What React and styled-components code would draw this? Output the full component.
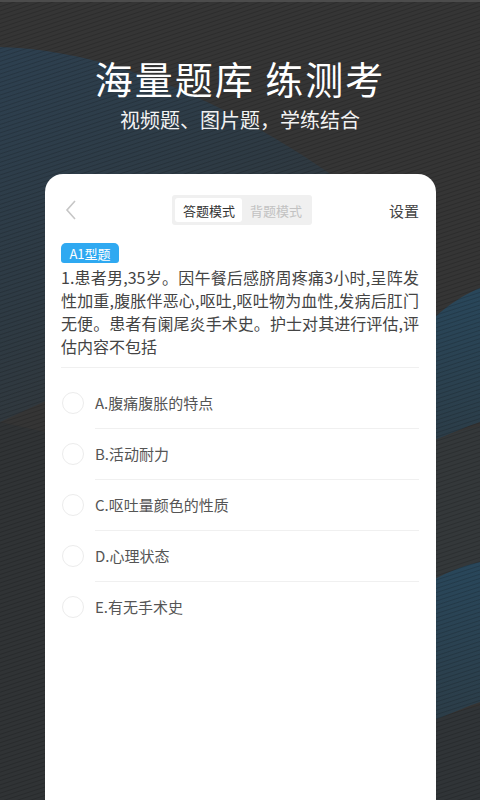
import React from "react";
import styled, { createGlobalStyle } from "styled-components";

const GlobalStyle = createGlobalStyle`
    html, body {
        margin: 0;
        padding: 0;
        background: #343434;
    }
    body {
        font-family: "Noto Sans CJK SC", "Noto Sans", sans-serif;
        -webkit-font-smoothing: antialiased;
    }
`;

const Screen = styled.div`
    position: relative;
    width: 480px;
    height: 800px;
    overflow: hidden;
    background: #353535;
    border-top: 2px solid #4c4c4c;
    box-sizing: border-box;
    display: flex;
    flex-direction: column;
    align-items: center;
`;

const Backdrop = styled.svg`
    position: absolute;
    left: 0;
    top: 0;
    z-index: 0;
`;

const Hero = styled.div`
    position: relative;
    z-index: 1;
    display: flex;
    flex-direction: column;
    align-items: center;
    padding-top: 48px;
    color: #fff;
`;

const Title = styled.h1`
    margin: 0;
    font-size: 38px;
    line-height: 55px;
    font-weight: 400;
    letter-spacing: 2px;
`;

const Subtitle = styled.p`
    margin: 0;
    font-size: 20px;
    line-height: 29px;
    font-weight: 400;
    color: #f2f2f2;
`;

const Card = styled.div`
    position: relative;
    z-index: 1;
    margin-top: 40px;
    width: 391px;
    flex: 1;
    margin-left: 1px;
    background: #fff;
    border-radius: 18px 18px 0 0;
    padding: 16px 17px 0 16px;
    box-sizing: border-box;
`;

const Header = styled.div`
    height: 40px;
    display: flex;
    align-items: center;
    justify-content: space-between;
`;

const Back = styled.svg`
    margin-left: 4px;
`;

const Segment = styled.div`
    display: flex;
    background: #f0f0f0;
    border-radius: 3px;
    padding: 3px;
    margin-left: 19px;
`;

const SegButton = styled.span`
    width: 67px;
    height: 24px;
    display: flex;
    align-items: center;
    justify-content: center;
    font-size: 13px;
    border-radius: 3px;
    color: ${(p) => (p.$active ? "#333" : "#c2c2c2")};
    background: ${(p) => (p.$active ? "#fff" : "transparent")};
`;

const Settings = styled.span`
    font-size: 15px;
    color: #444;
`;

const Tag = styled.span`
    display: inline-flex;
    align-items: center;
    justify-content: center;
    margin-top: 13px;
    width: 58px;
    height: 20px;
    border-radius: 5px 5px 3px 3px;
    background: #2fa9f1;
    color: #fff;
    font-size: 13px;
`;

const Question = styled.p`
    margin: 2px 0 0;
    padding-bottom: 9px;
    font-size: 16px;
    line-height: 23px;
    color: #444;
    border-bottom: 1px solid #f0f0f0;
    text-align: justify;
`;

const Options = styled.ul`
    list-style: none;
    margin: 10px 0 0;
    padding: 0;
`;

const Option = styled.li`
    display: flex;
    align-items: center;
`;

const Radio = styled.span`
    width: 22px;
    height: 22px;
    box-sizing: border-box;
    border-radius: 50%;
    border: 1px solid #ececec;
    margin-left: 1px;
    margin-right: 11px;
    flex-shrink: 0;
`;

const OptionLabel = styled.span`
    flex: 1;
    height: 50px;
    display: flex;
    align-items: center;
    font-size: 15px;
    color: #555;
    border-bottom: ${(p) => (p.$last ? "none" : "1px solid #f0f0f0")};
`;

const options = [
    "A.腹痛腹胀的特点",
    "B.活动耐力",
    "C.呕吐量颜色的性质",
    "D.心理状态",
    "E.有无手术史",
];

const Waves = () => (
    <Backdrop width="480" height="800" viewBox="0 0 480 800">
        <defs>
            <pattern id="lines" width="4" height="4" patternUnits="userSpaceOnUse" patternTransform="rotate(-18)">
                <rect width="4" height="1" fill="#000" opacity="0.16" />
            </pattern>
            <linearGradient id="band1" x1="0" y1="0" x2="0.6" y2="1">
                <stop offset="0" stopColor="#2d4050" />
                <stop offset="0.55" stopColor="#2e3a43" />
                <stop offset="1" stopColor="#333638" />
            </linearGradient>
            <linearGradient id="band2" x1="0" y1="0" x2="0" y2="1">
                <stop offset="0" stopColor="#29475b" />
                <stop offset="1" stopColor="#2c3d48" />
            </linearGradient>
        </defs>
        <path d="M0 45 C110 48 230 100 345 182 L345 260 L0 420 Z" fill="url(#band1)" />
        <path d="M0 420 L45 430 L45 800 L0 800 Z" fill="#303335" />
        <path d="M430 320 C450 300 470 290 480 286 L480 420 C465 425 450 432 430 440 Z" fill="url(#band2)" />
        <path d="M430 440 C450 432 470 426 480 424 L480 560 C465 565 450 570 430 580 Z" fill="#34383a" />
        <path d="M430 580 C450 568 470 562 480 560 L480 700 C465 705 450 712 430 720 Z" fill="url(#band2)" />
        <path d="M430 720 C450 712 470 706 480 704 L480 800 L430 800 Z" fill="#303437" />
        <rect width="480" height="800" fill="url(#lines)" />
    </Backdrop>
);

const App = () => (
    <>
        <GlobalStyle />
        <Screen>
            <Waves />
            <Hero>
                <Title>海量题库 练测考</Title>
                <Subtitle>视频题、图片题，学练结合</Subtitle>
            </Hero>
            <Card>
                <Header>
                    <Back width="12" height="20" viewBox="0 0 12 20">
                        <polyline points="10,1 2,10 10,19" fill="none" stroke="#c6c6c6" strokeWidth="1.6" />
                    </Back>
                    <Segment>
                        <SegButton $active>答题模式</SegButton>
                        <SegButton>背题模式</SegButton>
                    </Segment>
                    <Settings>设置</Settings>
                </Header>
                <Tag>A1型题</Tag>
                <Question>
                    1.患者男,35岁。因午餐后感脐周疼痛3小时,呈阵发性加重,腹胀伴恶心,呕吐,呕吐物为血性,发病后肛门无便。患者有阑尾炎手术史。护士对其进行评估,评估内容不包括
                </Question>
                <Options>
                    {options.map((o, i) => (
                        <Option key={o}>
                            <Radio />
                            <OptionLabel $last={i === options.length - 1}>{o}</OptionLabel>
                        </Option>
                    ))}
                </Options>
            </Card>
        </Screen>
    </>
);

export default App;
